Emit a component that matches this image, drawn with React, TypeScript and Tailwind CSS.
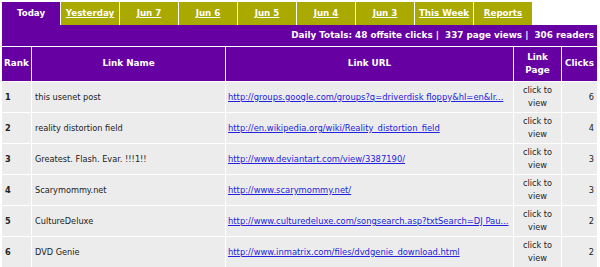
import React from "react";

const tabs = ["Today", "Yesterday", "Jun 7", "Jun 6", "Jun 5", "Jun 4", "Jun 3", "This Week", "Reports"];

const rows = [
  { rank: 1, name: "this usenet post", url: "http://groups.google.com/groups?q=driverdisk floppy&hl=en&lr...", clicks: 6 },
  { rank: 2, name: "reality distortion field", url: "http://en.wikipedia.org/wiki/Reality_distortion_field", clicks: 4 },
  { rank: 3, name: "Greatest. Flash. Evar. !!!1!!", url: "http://www.deviantart.com/view/3387190/", clicks: 3 },
  { rank: 4, name: "Scarymommy.net", url: "http://www.scarymommy.net/", clicks: 3 },
  { rank: 5, name: "CultureDeluxe", url: "http://www.culturedeluxe.com/songsearch.asp?txtSearch=DJ Pau...", clicks: 2 },
  { rank: 6, name: "DVD Genie", url: "http://www.inmatrix.com/files/dvdgenie_download.html", clicks: 2 },
];

const font = { fontFamily: '"DejaVu Sans", Verdana, sans-serif' };

export default function App() {
  return (
    <div className="w-[600px] h-[267px] overflow-hidden bg-white pt-[2px] pl-[2px]" style={font}>
      <div className="w-[595px]">
        <div className="flex gap-px h-[23px] bg-white">
          {tabs.map((t, i) => (
            <div
              key={t}
              className={
                "w-[58px] flex items-center justify-center text-[8.7px] font-bold text-white " +
                (i === 0 ? "bg-[#6600a3]" : "bg-[#a9a900] underline")
              }
            >
              {t}
            </div>
          ))}
        </div>
        <div className="h-[21px] bg-[#6600a3] flex items-center justify-end pr-[3px] text-[8.8px] font-bold text-white">
          Daily Totals: 48 offsite clicks&nbsp;|&nbsp; 337 page views&nbsp;|&nbsp; 306 readers
        </div>
        <div className="grid grid-cols-[29px_193px_287px_47px_35px] gap-px bg-white pt-px">
          <div className="h-[34px] bg-[#6600a3] text-white font-bold text-[8.8px] flex items-center pl-[2px]">Rank</div>
          <div className="h-[34px] bg-[#6600a3] text-white font-bold text-[8.8px] flex items-center justify-center">Link Name</div>
          <div className="h-[34px] bg-[#6600a3] text-white font-bold text-[8.8px] flex items-center justify-center">Link URL</div>
          <div className="h-[34px] bg-[#6600a3] text-white font-bold text-[8.8px] flex items-center justify-center text-center leading-[13px]">
            Link<br />Page
          </div>
          <div className="h-[34px] bg-[#6600a3] text-white font-bold text-[8.8px] flex items-center justify-center">Clicks</div>
          {rows.map((r) => (
            <React.Fragment key={r.rank}>
              <div className="h-[30px] bg-[#ececec] flex items-center pl-[3px] text-[8.2px] font-bold text-[#222]">{r.rank}</div>
              <div className="h-[30px] bg-[#ececec] flex items-center pl-[3px] text-[8.2px] text-[#222] whitespace-nowrap">{r.name}</div>
              <div className="h-[30px] bg-[#ececec] flex items-center pl-[2px] text-[8.4px] whitespace-nowrap overflow-hidden">
                <a href="#" className="text-[#2222dd] underline">{r.url}</a>
              </div>
              <div className="h-[30px] bg-[#ececec] flex items-center justify-center text-center text-[8.2px] leading-[13px] text-[#222]">
                click to<br />view
              </div>
              <div className="h-[30px] bg-[#ececec] flex items-center justify-end pr-[3px] text-[8.2px] text-[#222]">{r.clicks}</div>
            </React.Fragment>
          ))}
        </div>
      </div>
    </div>
  );
}
